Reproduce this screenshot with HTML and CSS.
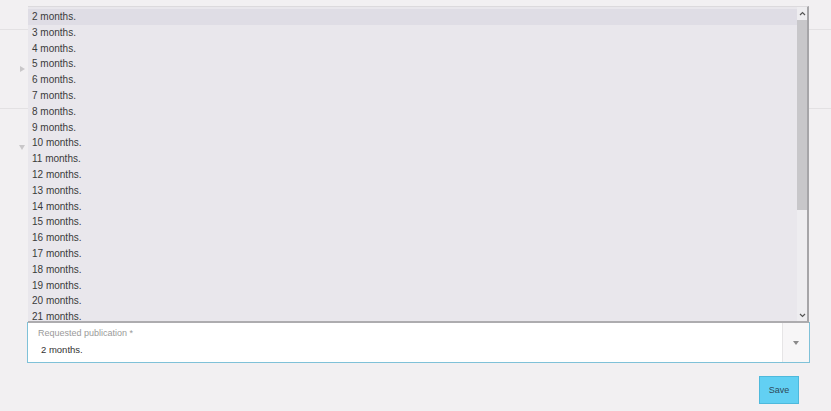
FILE: index.html
```html
<!DOCTYPE html>
<html lang="en">
    <head>
        <meta charset="UTF-8" />
        <meta name="viewport" content="width=device-width, initial-scale=1.0" />
        <link rel="stylesheet" href="styles.css">
    </head>
    <body>
        <div class="band"></div>
        <div class="group">
            <span class="caret caret-right"></span>
        </div>
        <div class="group open">
            <span class="caret caret-down"></span>
        </div>
        <div class="form">
            <div class="field">
                <div class="options">
                    <ul class="option-list">
                        <li class="active">2 months.</li>
                        <li>3 months.</li>
                        <li>4 months.</li>
                        <li>5 months.</li>
                        <li>6 months.</li>
                        <li>7 months.</li>
                        <li>8 months.</li>
                        <li>9 months.</li>
                        <li>10 months.</li>
                        <li>11 months.</li>
                        <li>12 months.</li>
                        <li>13 months.</li>
                        <li>14 months.</li>
                        <li>15 months.</li>
                        <li>16 months.</li>
                        <li>17 months.</li>
                        <li>18 months.</li>
                        <li>19 months.</li>
                        <li>20 months.</li>
                        <li>21 months.</li>
                    </ul>
                    <div class="scrollbar">
                        <svg class="arrow" width="7" height="5" viewBox="0 0 7 5"><path d="M1 4 L3.5 1.5 L6 4" fill="none" stroke="#555" stroke-width="1.2"/></svg>
                        <div class="track"><div class="thumb"></div></div>
                        <svg class="arrow" width="7" height="5" viewBox="0 0 7 5"><path d="M1 1 L3.5 3.5 L6 1" fill="none" stroke="#555" stroke-width="1.2"/></svg>
                    </div>
                </div>
                <div class="field-body">
                    <label class="field-label">Requested publication *</label>
                    <div class="field-value">2 months.</div>
                </div>
                <div class="field-toggle"><span class="toggle-caret"></span></div>
            </div>
            <div class="actions">
                <button class="save">Save</button>
            </div>
        </div>
    </body>
</html>
```

FILE: styles.css
```css
* {
    box-sizing: border-box;
}
body {
    margin: 0;
    background-color: #f2f0f2;
    color: #333;
    font-family: "Liberation Sans", Arial, sans-serif;
    overflow: hidden;
}
.band {
    height: 30px;
    border-bottom: 1px solid #e3e1e3;
}
.group {
    height: 79px;
    border-bottom: 1px solid #e3e1e3;
    padding: 36px 0 0 19px;
}
.group.open {
    height: 213px;
    border-bottom: none;
}
.caret {
    display: block;
    width: 0;
    height: 0;
}
.caret-right {
    border-top: 3px solid transparent;
    border-bottom: 3px solid transparent;
    border-left: 5px solid #c9c7c9;
    margin-left: 1px;
}
.caret-down {
    border-left: 3.5px solid transparent;
    border-right: 3.5px solid transparent;
    border-top: 5px solid #c9c7c9;
}
.form {
    padding: 0 21px 0 27px;
}
.field {
    position: relative;
    display: flex;
    height: 41px;
    background-color: #fff;
    border: 1px solid #7fc1d8;
}
.options {
    position: absolute;
    left: 0;
    bottom: 100%;
    width: 781px;
    height: 317px;
    display: flex;
    background-color: #e9e7ec;
    border-top: 1px solid #dcdadd;
    border-right: 2px solid #a6a5a8;
    border-bottom: 2px solid #adacaf;
    overflow: hidden;
}
.option-list {
    flex: 1;
    margin: 0;
    padding: 2px 0 0 0;
    list-style: none;
}
.option-list li {
    height: 15.8px;
    line-height: 15.8px;
    padding-left: 4px;
    font-size: 10px;
    color: #3a3a3a;
    white-space: nowrap;
}
.option-list li.active {
    background-color: #dfdde5;
}
.scrollbar {
    width: 10px;
    display: flex;
    flex-direction: column;
    align-items: center;
    background-color: #eeedf0;
    padding: 4px 0 3px 0;
}
.arrow {
    flex: none;
}
.track {
    flex: 1;
    width: 100%;
    padding: 4px 0;
}
.thumb {
    height: 190px;
    background-color: #c8c7ca;
}
.field-body {
    flex: 1;
    padding: 5px 10px 0 10px;
}
.field-label {
    display: block;
    height: 11px;
    line-height: 11px;
    font-size: 9px;
    color: #9a9a9a;
}
.field-value {
    margin: 5px 0 0 3px;
    line-height: 12px;
    font-size: 9.5px;
    color: #333;
}
.field-toggle {
    width: 27px;
    display: flex;
    align-items: center;
    justify-content: center;
    background-color: #f7f6f7;
    border-left: 1px solid #e6e5e6;
}
.toggle-caret {
    width: 0;
    height: 0;
    border-left: 3px solid transparent;
    border-right: 3px solid transparent;
    border-top: 4px solid #8a8a8a;
}
.actions {
    display: flex;
    justify-content: flex-end;
    padding: 13px 11px 0 0;
}
.save {
    width: 40px;
    height: 28px;
    padding: 0;
    font-family: inherit;
    font-size: 9px;
    color: #2e4a5a;
    background-color: #62d0f3;
    border: 1px solid #4eb9dc;
    border-radius: 0;
}
```
